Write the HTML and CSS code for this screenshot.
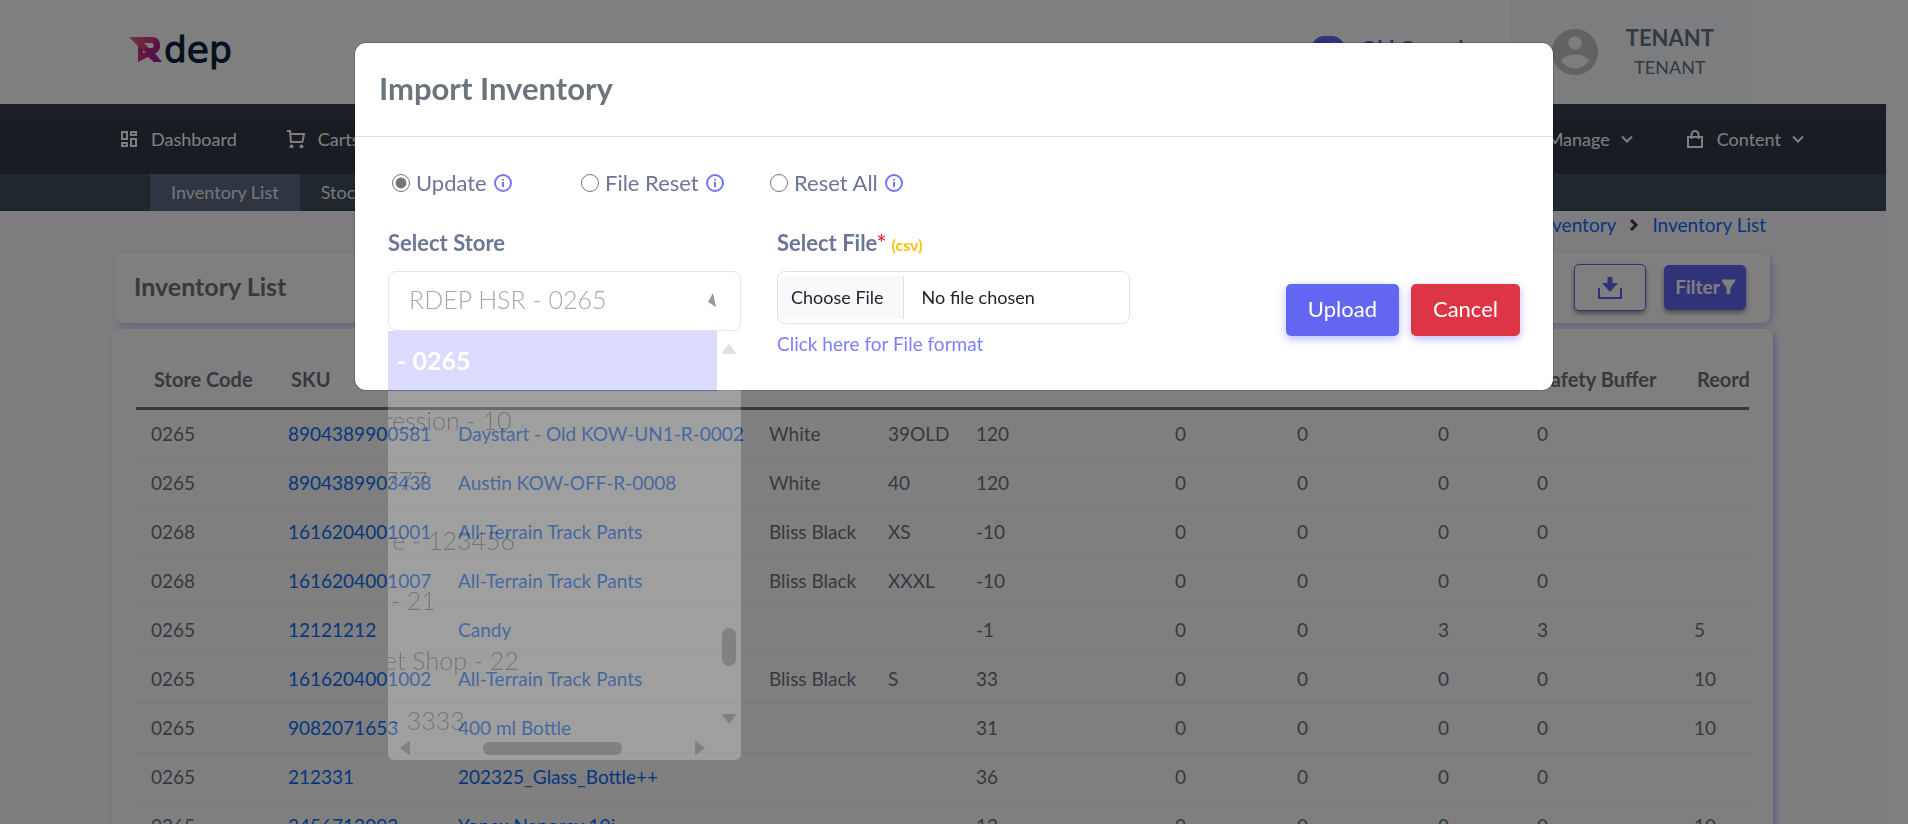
FILE: index.html
```html
<!DOCTYPE html>
<html lang="en">
<head>
<meta charset="utf-8">
<title>Inventory List</title>
<link rel="stylesheet" href="styles.css">
</head>
<body>
<div class="page">
  <header class="topbar">
    <a class="logo" href="#" aria-label="Rdep">
      <svg class="logo-mark" viewBox="0 0 33 25" aria-hidden="true">
        <defs><linearGradient id="lg" x1="0" y1="0" x2="1" y2="0.4"><stop offset="0" stop-color="#f4706c"/><stop offset="0.55" stop-color="#d83a83"/><stop offset="1" stop-color="#a8189a"/></linearGradient></defs>
        <path fill="url(#lg)" fill-rule="evenodd" d="M0 0H23C29 0 31 4 31 8.500C31 12.500 29 15.500 26 16.500L33 25H25L19 20L9 25V9ZM15 6L20 11H23C25 11 25.500 6 23 6ZM14 13.500V16.500L16.500 15.500Z"/>
        <path fill="#8d1c60" opacity=".3" d="M9 9L19 20L9 16Z M20 11L26 16.500L20 17L16 12Z"/>
      </svg>
      <span class="logo-word">dep</span>
    </a>
    <div class="topbar-right">
      <label class="console-switch"><input type="checkbox" role="switch" checked>Old Console</label>
      <div class="user">
        <svg class="avatar" viewBox="2 2 20 20" aria-hidden="true"><path fill="#c4c4c4" d="M12 2C6.480 2 2 6.480 2 12s4.480 10 10 10 10-4.480 10-10S17.520 2 12 2zm0 3.200c1.600 0 2.900 1.300 2.900 2.900S13.600 11 12 11s-2.900-1.300-2.900-2.900S10.400 5.200 12 5.200zm0 14c-2.500 0-4.710-1.280-6-3.600 1.500-1.700 4-2.600 6-2.600s4.500.9 6 2.600c-1.290 2.320-3.500 3.600-6 3.600z"/></svg>
        <div class="user-text"><strong>TENANT</strong><span>TENANT</span></div>
      </div>
    </div>
  </header>

  <nav class="mainnav">
    <div class="nav-group">
      <a href="#"><svg class="nav-icon" viewBox="0 0 18 18" fill="none" stroke="currentColor" stroke-width="2"><path d="M2 2h5v7H2zM11 2h5v3h-5zM11 9h5v7h-5zM2 13h5v3H2z"/></svg>Dashboard</a>
      <a href="#"><svg class="nav-icon" viewBox="0 0 18 18" fill="none" stroke="currentColor" stroke-width="2"><path d="M0 1h3l1 11h12M3.500 4H17l-1.500 8"/><circle cx="4.500" cy="16.500" r="1"/><circle cx="14.500" cy="16.500" r="1"/></svg>Carts</a>
    </div>
    <div class="nav-group nav-group-end">
      <a href="#">Manage<svg class="chevron" viewBox="0 0 12 12" fill="none" stroke="currentColor" stroke-width="2"><path d="M1 3.500l5 5 5-5"/></svg></a>
      <a href="#"><svg class="nav-icon" viewBox="0 0 18 18" fill="none" stroke="currentColor" stroke-width="2"><path d="M2 7h14v10H2zM5.500 9V4.500a3.500 3.500 0 0 1 7 0V9"/></svg>Content<svg class="chevron" viewBox="0 0 12 12" fill="none" stroke="currentColor" stroke-width="2"><path d="M1 3.500l5 5 5-5"/></svg></a>
    </div>
  </nav>
  <nav class="subnav"><a class="active" href="#">Inventory List</a><a href="#">Stock</a></nav>

  <main class="content">
    <div class="breadcrumb"><a href="#">Inventory</a><svg class="chevron" viewBox="0 0 12 12" fill="none" stroke="#3c3c46" stroke-width="3"><path d="M3 1l5 5-5 5"/></svg><a href="#">Inventory List</a></div>
    <section class="titlecard">
      <h1>Inventory List</h1>
      <div class="actions">
        <button class="btn-outline" type="button" aria-label="Download"><svg viewBox="0 0 24 22"><path fill="#6366f1" d="M9.500 0h5v6H20l-8 9-8-9h5.500zM0 11h2v9h20v-9h2v11H0z"/></svg></button>
        <button class="btn-filter" type="button">Filter<svg viewBox="0 0 14 16"><path fill="currentColor" d="M0 0h14v2L9 9v6l-4 1V9L0 2z"/></svg></button>
      </div>
    </section>
    <section class="tablecard">
      <div class="tablewrap">
        <table>
          <colgroup><col class="w137"><col class="w170"><col class="w311"><col class="w119"><col class="w88"><col class="w199"><col class="w122"><col class="w141"><col class="w99"><col class="w157"><col class="w141"></colgroup>
          <thead><tr><th>Store Code</th><th>SKU</th><th>Name</th><th>Color</th><th>Size</th><th>Stock</th><th>Blocked</th><th>Reserved</th><th>Buffer</th><th>Safety Buffer</th><th>Reorder</th></tr></thead>
          <tbody>
            <tr><td>0265</td><td><a href="#">8904389900581</a></td><td><a href="#">Daystart - Old KOW-UN1-R-0002</a></td><td>White</td><td>39OLD</td><td>120</td><td>0</td><td>0</td><td>0</td><td>0</td><td></td></tr>
            <tr><td>0265</td><td><a href="#">8904389903438</a></td><td><a href="#">Austin KOW-OFF-R-0008</a></td><td>White</td><td>40</td><td>120</td><td>0</td><td>0</td><td>0</td><td>0</td><td></td></tr>
            <tr><td>0268</td><td><a href="#">1616204001001</a></td><td><a href="#">All-Terrain Track Pants</a></td><td>Bliss Black</td><td>XS</td><td>-10</td><td>0</td><td>0</td><td>0</td><td>0</td><td></td></tr>
            <tr><td>0268</td><td><a href="#">1616204001007</a></td><td><a href="#">All-Terrain Track Pants</a></td><td>Bliss Black</td><td>XXXL</td><td>-10</td><td>0</td><td>0</td><td>0</td><td>0</td><td></td></tr>
            <tr><td>0265</td><td><a href="#">12121212</a></td><td><a href="#">Candy</a></td><td></td><td></td><td>-1</td><td>0</td><td>0</td><td>3</td><td>3</td><td>5</td></tr>
            <tr><td>0265</td><td><a href="#">1616204001002</a></td><td><a href="#">All-Terrain Track Pants</a></td><td>Bliss Black</td><td>S</td><td>33</td><td>0</td><td>0</td><td>0</td><td>0</td><td>10</td></tr>
            <tr><td>0265</td><td><a href="#">9082071653</a></td><td><a href="#">400 ml Bottle</a></td><td></td><td></td><td>31</td><td>0</td><td>0</td><td>0</td><td>0</td><td>10</td></tr>
            <tr><td>0265</td><td><a href="#">212331</a></td><td><a href="#">202325_Glass_Bottle++</a></td><td></td><td></td><td>36</td><td>0</td><td>0</td><td>0</td><td>0</td><td></td></tr>
            <tr><td>0265</td><td><a href="#">3456712092</a></td><td><a href="#">Yonex Nanoray 10i</a></td><td></td><td></td><td>12</td><td>0</td><td>0</td><td>0</td><td>0</td><td>10</td></tr>
          </tbody>
        </table>
      </div>
    </section>
  </main>
</div>

<div class="backdrop">
  <div class="modal" role="dialog" aria-labelledby="modal-title">
    <div class="modal-head"><h2 id="modal-title">Import Inventory</h2></div>
    <form class="modal-body">
      <div class="radios">
        <div class="radio"><input type="radio" name="mode" id="m1" checked><label for="m1">Update</label><svg class="info" viewBox="0 0 18 18"><circle cx="9" cy="9" r="8"/><path d="M9 8v5M9 5v1.500"/></svg></div>
        <div class="radio"><input type="radio" name="mode" id="m2"><label for="m2">File Reset</label><svg class="info" viewBox="0 0 18 18"><circle cx="9" cy="9" r="8"/><path d="M9 8v5M9 5v1.500"/></svg></div>
        <div class="radio"><input type="radio" name="mode" id="m3"><label for="m3">Reset All</label><svg class="info" viewBox="0 0 18 18"><circle cx="9" cy="9" r="8"/><path d="M9 8v5M9 5v1.500"/></svg></div>
      </div>
      <div class="fields">
        <div class="field">
          <label class="field-label" for="store">Select Store</label>
          <div class="store">
            <select id="store"><option>RDEP HSR - 0265</option></select>
            <svg class="store-arrow" viewBox="0 0 10 14"><path fill="#999" d="M6 0l3 14-8-5z"/></svg>
            <div class="menu">
              <ul role="listbox">
                <li class="selected" role="option"> - 0265</li>
                <li role="option">ression - 10</li>
                <li role="option">777</li>
                <li role="option">re - 123456</li>
                <li role="option"> - 21</li>
                <li role="option">et Shop - 22</li>
                <li role="option"> - 3333</li>
              </ul>
              <div class="vbar"><svg viewBox="0 0 14 10"><path d="M7 0l7 9-1 1H1L0 9z"/></svg><span class="vthumb"></span><svg viewBox="0 0 14 10"><path d="M7 10L0 1l1-1h12l1 1z"/></svg></div>
              <div class="hbar"><svg viewBox="0 0 10 14"><path d="M0 7l9-7 1 1v12l-1 1z"/></svg><span class="hthumb"></span><svg viewBox="0 0 10 14"><path d="M10 7L1 0 0 1v12l1 1z"/></svg></div>
            </div>
          </div>
        </div>
        <div class="field">
          <label class="field-label" for="file">Select File<span class="req">*</span> <small>(csv)</small></label>
          <input class="file" type="file" id="file">
          <a class="format" href="#">Click here for File format</a>
        </div>
        <div class="buttons">
          <button class="btn upload" type="button">Upload</button>
          <button class="btn cancel" type="button">Cancel</button>
        </div>
      </div>
    </form>
  </div>
</div>
</body>
</html>
```
FILE: styles.css
```css
* { box-sizing: border-box; }
html, body { height: 100%; }
body {
  margin: 0;
  overflow: hidden;
  background: #fff;
  color: #6c757d;
  font-family: Lato, "Open Sans", sans-serif;
  font-size: 19px;
  line-height: 24px;
}
a { text-decoration: none; color: inherit; }
h1, h2 { margin: 0; }
button, input, select { font-family: inherit; }

.page { height: 100%; margin-right: 22px; overflow: hidden; background: #fbfbff; }

.topbar { display: flex; justify-content: space-between; height: 104px; padding: 0 137px 0 129px; background: #fff; }
.logo { display: flex; align-items: center; gap: 2px; }
.logo-mark { width: 33px; height: 25px; margin-bottom: 6px; }
.logo-word { padding-bottom: 4px; color: #04203f; font: 36px/40px "DejaVu Sans", sans-serif; -webkit-text-stroke: 1px #04203f; }
.topbar-right { display: flex; }
.console-switch { display: flex; align-items: center; gap: 16px; padding: 0 36px 8px 0; color: #6366f1; font-size: 21px; font-weight: 700; }
.console-switch input { appearance: none; width: 32px; height: 24px; margin: 0; border-radius: 12px; background: radial-gradient(circle at 22px 14px, #fff 7px, transparent 8px) #6366f1; }
.user { display: flex; align-items: center; gap: 28px; padding: 0 35px 0 41px; background: #f8fafd; }
.avatar { width: 46px; height: 46px; }
.user-text { display: flex; flex-direction: column; align-items: center; gap: 5px; padding-top: 1px; }
.user-text strong { font-size: 22px; }
.user-text span { font-size: 18px; }

.mainnav { display: flex; justify-content: space-between; align-items: center; height: 70px; padding: 0 82px 0 120px; background: linear-gradient(#39414c, #323846 40%); color: #fff; font-size: 18px; }
.nav-group { display: flex; gap: 50px; }
.nav-group-end { gap: 53px; }
.nav-group a { display: flex; align-items: center; }
.nav-icon { width: 18px; height: 18px; margin-right: 13px; }
.chevron { width: 12px; height: 12px; margin-left: 11px; }

.subnav { display: flex; height: 37px; padding-left: 150px; background: #404e5b; color: #eee; font-size: 18px; line-height: 36px; }
.subnav a { padding: 0 21px; }
.subnav .active { background: #5e6b82; }

.content { padding: 2px 113px 0 112px; }
.breadcrumb { display: flex; justify-content: flex-end; align-items: center; padding-right: 7px; color: #0d6efd; }
.breadcrumb .chevron { margin: 0 12px; }
.titlecard { display: flex; justify-content: space-between; align-items: center; height: 71px; margin: 15px 3px 6px; padding: 0 24px 0 19px; border-radius: 8px; background: #fff; box-shadow: 2px 3px 6px rgba(99, 102, 241, .35); }
.titlecard h1 { padding-bottom: 3px; font-size: 25px; }
.actions { display: flex; align-items: center; gap: 18px; }
.btn-outline { display: flex; align-items: center; justify-content: center; width: 72px; height: 47px; border: 1px solid #6366f1; border-radius: 5px; background: #fff; box-shadow: 0 3px 5px rgba(0, 0, 0, .4); }
.btn-outline svg { width: 24px; height: 22px; }
.btn-filter { display: flex; align-items: center; justify-content: center; gap: 2px; width: 82px; height: 45px; padding: 0 0 2px; border: 0; border-radius: 5px; background: #6366f1; color: #fff; font-size: 19px; font-weight: 700; box-shadow: 0 3px 5px rgba(0, 0, 0, .4); }
.btn-filter svg { width: 13px; height: 16px; }

.tablecard { padding: 24px 24px 0; border-radius: 8px; background: #fff; box-shadow: 3px 2px 6px rgba(99, 102, 241, .35); }
.tablewrap { overflow: hidden; }
table { width: 1684px; table-layout: fixed; border-collapse: separate; border-spacing: 0; }
th { height: 57px; padding: 0 18px 2px; border-bottom: 3px solid #6c757d; font-size: 20px; text-align: left; white-space: nowrap; }
td { height: 49px; padding: 0 0 0 15px; border-bottom: 1px solid #f6f6f8; white-space: nowrap; }
td a { color: #0d6efd; }
.w137 { width: 137px; } .w170 { width: 170px; } .w311 { width: 311px; } .w119 { width: 119px; }
.w88 { width: 88px; } .w199 { width: 199px; } .w122 { width: 122px; } .w141 { width: 141px; }
.w99 { width: 99px; } .w157 { width: 157px; }

.backdrop { position: fixed; inset: 0; padding-top: 42px; background: rgba(0, 0, 0, .5); }
.modal { max-width: 1200px; margin: 0 auto; border: 1px solid rgba(0, 0, 0, .175); border-radius: 12px; background: #fff; background-clip: padding-box; }
.modal-head { padding: 27px 24px 29px; border-bottom: 1px solid #dee2e6; }
.modal-head h2 { font-size: 31px; line-height: 37px; }
.modal-body { padding: 32px 33px 34px; }
.radios { display: flex; padding-left: 4px; color: #6d7696; font-size: 22px; line-height: 28px; }
.radio { display: flex; align-items: center; width: 189px; }
.radio input { width: 18px; height: 18px; margin: 0 6px 0 0; accent-color: #757575; }
.info { width: 18px; height: 18px; margin-left: 7px; fill: none; stroke: #7376ff; stroke-width: 2; }
.fields { display: flex; gap: 36px; padding-top: 32px; }
.field { display: flex; flex-direction: column; width: 353px; }
.field-label { height: 28px; margin-bottom: 14px; color: #6d7696; font-size: 22px; font-weight: 700; line-height: 28px; }
.req { color: #dc3545; }
.field-label small { color: #ffc107; font-size: 16px; line-height: 16px; }
.store { position: relative; }
.store select { appearance: none; display: block; width: 100%; height: 60px; padding: 0 20px 4px; border: 1px solid #e4e5e8; border-radius: 8px; background: #fff; color: #a8a8a8; font-size: 25px; font-weight: 300; }
.store-arrow { position: absolute; top: 22px; right: 24px; width: 10px; height: 14px; }
.menu { position: absolute; top: 100%; left: 0; right: 0; display: grid; grid-template: 405px 24px / 1fr 24px; border-radius: 0 0 6px 6px; background: #fff; opacity: .25; overflow: hidden; }
.menu ul { margin: 0; padding: 0; list-style: none; overflow: hidden; font-size: 25px; font-weight: 300; color: #4f5866; }
.menu li { height: 60px; line-height: 58px; text-indent: -4px; white-space: pre; }
.menu .selected { background: #7377fb; color: #fff; font-weight: 700; text-indent: 3px; }
.vbar { display: flex; flex-direction: column; align-items: center; padding: 13px 0 12px; fill: #888; }
.vbar svg { width: 14px; height: 10px; }
.vthumb { width: 14px; height: 38px; margin: auto 0 48px; border-radius: 7px; background: #888; }
.hbar { display: flex; align-items: center; padding: 0 12px; fill: #888; }
.hbar svg { width: 10px; height: 14px; }
.hthumb { width: 139px; height: 13px; margin: 0 auto 0 73px; border-radius: 6px; background: #888; }
.file { display: block; width: 100%; height: 53px; padding: 4px 0; border: 1px solid #dee2e6; border-radius: 8px; color: #212529; font-size: 18px; }
.file::file-selector-button { height: 43px; margin: 0 18px 0 0; padding: 0 19px 2px 13px; border: 0; border-right: 1px solid #dee2e6; background: #f8f9fb; color: #212529; font: inherit; }
.format { margin-top: 8px; color: #7c80fb; }
.buttons { display: flex; gap: 12px; margin-left: auto; padding-top: 55px; }
.btn { height: 52px; padding: 0 22px 3px; border: 0; border-radius: 5px; color: #fff; font-size: 22px; box-shadow: 0 3px 8px rgba(99, 102, 241, .45); }
.upload { background: #6366f1; }
.cancel { background: #dc3545; }
```
